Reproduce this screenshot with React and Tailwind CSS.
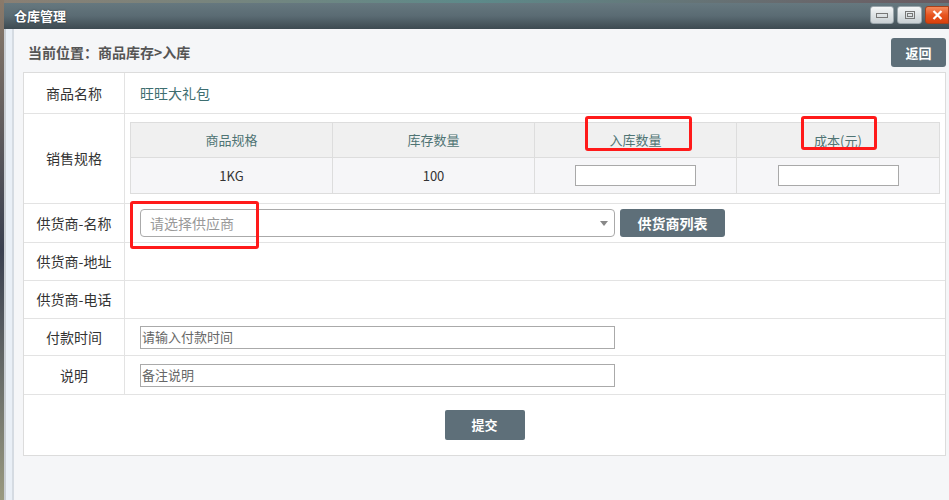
import React from "react";

const F = { fontFamily: '"Noto Sans CJK SC", "Noto Sans", sans-serif' };

function Label({ children }) {
  return (
    <div className="w-[101px] shrink-0 border-r border-[#e3e3e3] flex items-center justify-center text-[14px] text-[#333]">
      {children}
    </div>
  );
}

function Row({ h, label, children, last }) {
  return (
    <div className={`flex ${h} ${last ? "" : "border-b border-[#e3e3e3]"}`}>
      <Label>{label}</Label>
      <div className="flex-1 flex items-center pl-[15px]">{children}</div>
    </div>
  );
}

export default function App() {
  return (
    <div
      className="relative w-[949px] h-[500px] overflow-hidden bg-gradient-to-b from-[#7a8a8a] to-[#5a5f55]"
      style={F}
    >
      {/* desktop strip */}
      <div className="h-[3px] bg-gradient-to-r from-[#8a7f73] via-[#5c8a8a] to-[#6a5a60]" />
      <div className="absolute left-0 top-0 bottom-0 w-[4px] bg-gradient-to-b from-[#8a7a6a] via-[#3a4050] to-[#9a9a80]" />

      <div className="ml-[4px] flex flex-col h-[497px]">
        {/* title bar */}
        <div className="h-[26px] shrink-0 bg-gradient-to-b from-[#66787f] via-[#5a6b73] to-[#3d4a51] flex items-center justify-between pl-[10px]">
          <span className="text-white text-[13px] font-bold [text-shadow:0_0_2px_rgba(0,0,0,0.6)]">仓库管理</span>
          <div className="flex gap-[3px] items-start h-full pt-[3px]">
            <div className="w-[24px] h-[18px] rounded-[3px] bg-gradient-to-b from-[#f4f6f7] to-[#c9d0d4] border border-[#9aa5ab] flex items-center justify-center">
              <div className="w-[12px] h-[5px] border border-[#777]" />
            </div>
            <div className="w-[25px] h-[18px] rounded-[3px] bg-gradient-to-b from-[#f4f6f7] to-[#c9d0d4] border border-[#9aa5ab] flex items-center justify-center">
              <div className="w-[10px] h-[8px] border border-[#777] flex items-center justify-center">
                <div className="w-[6px] h-[4px] border border-[#777]" />
              </div>
            </div>
            <div className="w-[24px] h-[18px] rounded-l-[3px] bg-gradient-to-b from-[#f38a5a] via-[#e8541e] to-[#d8400c] border border-[#a9401a] flex items-center justify-center">
              <svg width="11" height="10" viewBox="0 0 11 10">
                <path d="M1.5 1 L9.5 9 M9.5 1 L1.5 9" stroke="#fff" strokeWidth="2.2" />
              </svg>
            </div>
          </div>
        </div>

        {/* body */}
        <div className="flex flex-1 min-h-0">
          <div className="w-[10px] shrink-0 bg-[#e9eff6] border-l-[2px] border-l-[#c9ced3] border-r-[2px] border-r-[#d5dbe2]" />
          <div className="flex-1 bg-[#f5f6f8] pl-[9px] pr-[3px]">
            {/* header */}
            <div className="h-[43px] pt-[9px] flex items-start justify-between">
              <div className="h-[29px] flex items-center pl-[5px] text-[14px] font-bold text-[#555]">
                当前位置：商品库存&gt;入库
              </div>
              <div className="h-[29px] w-[55px] rounded-[3px] bg-[#5e6f79] text-white text-[13px] font-bold flex items-center justify-center">
                返回
              </div>
            </div>

            {/* table */}
            <div className="bg-white border border-[#dcdcdc] w-[923px]">
              <Row h="h-[41px]" label="商品名称">
                <span className="text-[14px] text-[#3d6e70]">旺旺大礼包</span>
              </Row>

              <div className="flex h-[90px] border-b border-[#e3e3e3]">
                <Label>销售规格</Label>
                <div className="flex-1 pl-[5px] pr-[5px] pt-[8px]">
                  <div className="border border-[#dddddd] text-[13px]">
                    <div className="grid grid-cols-4 h-[35px] bg-[#f0f0f0] border-b border-[#dddddd] text-[#4f7474]">
                      <div className="flex items-center justify-center border-r border-[#dddddd]">商品规格</div>
                      <div className="flex items-center justify-center border-r border-[#dddddd]">库存数量</div>
                      <div className="flex items-center justify-center border-r border-[#dddddd]">入库数量</div>
                      <div className="flex items-center justify-center pt-[2px]">成本(元)</div>
                    </div>
                    <div className="grid grid-cols-4 h-[35px] bg-[#f6f6f8] text-[#333]">
                      <div className="flex items-center justify-center border-r border-[#dddddd]">1KG</div>
                      <div className="flex items-center justify-center border-r border-[#dddddd]">100</div>
                      <div className="flex items-center justify-center border-r border-[#dddddd]">
                        <div className="w-[121px] h-[21px] bg-white border border-[#a9a9a9]" />
                      </div>
                      <div className="flex items-center justify-center">
                        <div className="w-[121px] h-[21px] bg-white border border-[#a9a9a9]" />
                      </div>
                    </div>
                  </div>
                </div>
              </div>

              <Row h="h-[39px]" label="供货商-名称">
                <div className="flex items-center gap-[5px]">
                  <div className="relative w-[475px] h-[28px] border border-[#aaaaaa] rounded-[4px] flex items-center pl-[9px] text-[14px] text-[#999]">
                    请选择供应商
                    <svg className="absolute right-[6px] top-[11px]" width="8" height="5" viewBox="0 0 8 5">
                      <path d="M0 0 L8 0 L4 5 Z" fill="#888" />
                    </svg>
                  </div>
                  <div className="w-[105px] h-[28px] rounded-[3px] bg-[#5e6f79] text-white text-[14px] font-bold flex items-center justify-center">
                    供货商列表
                  </div>
                </div>
              </Row>
              <Row h="h-[38px]" label="供货商-地址" />
              <Row h="h-[38px]" label="供货商-电话" />
              <Row h="h-[37px]" label="付款时间">
                <div className="w-[475px] h-[23px] border border-[#aaaaaa] flex items-center pl-[1px] text-[13px] text-[#666]">
                  请输入付款时间
                </div>
              </Row>
              <Row h="h-[39px]" label="说明">
                <div className="w-[475px] h-[23px] border border-[#aaaaaa] flex items-center pl-[1px] text-[13px] text-[#666]">
                  备注说明
                </div>
              </Row>
              <div className="h-[60px] flex items-start justify-center pt-[15px]">
                <div className="w-[80px] h-[30px] rounded-[2px] bg-[#5e6f79] text-white text-[13px] font-bold flex items-center justify-center">
                  提交
                </div>
              </div>
            </div>
          </div>
        </div>
      </div>

      {/* red annotation boxes */}
      <div className="absolute left-[585px] top-[116px] w-[107px] h-[35px] border-[3px] border-[#ff1a1a] rounded-[3px]" />
      <div className="absolute left-[801px] top-[116px] w-[76px] h-[34px] border-[3px] border-[#ff1a1a] rounded-[3px]" />
      <div className="absolute left-[130px] top-[201px] w-[129px] h-[48px] border-[3px] border-[#ff1a1a] rounded-[3px]" />
    </div>
  );
}
